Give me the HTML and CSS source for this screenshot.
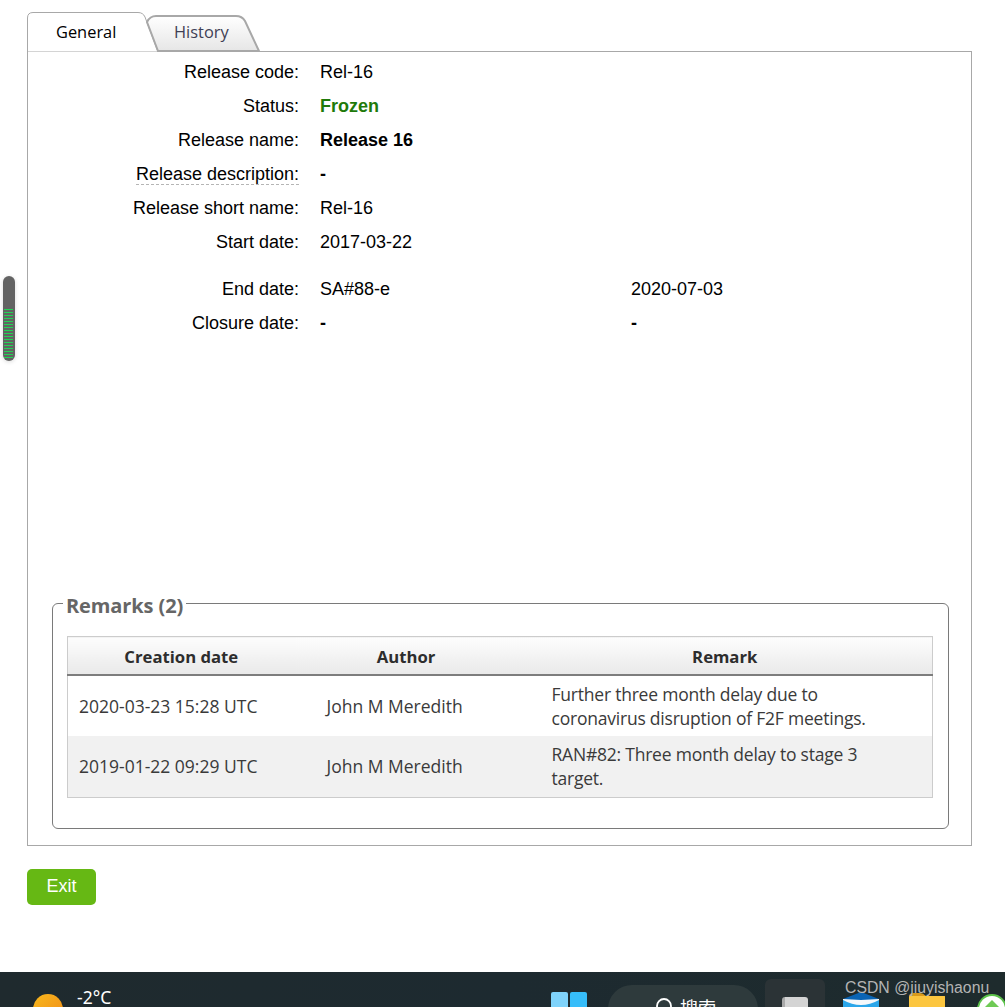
FILE: index.html
```html
<!DOCTYPE html>
<html lang="en">
<head>
<meta charset="utf-8">
<title>Release 16</title>
<link rel="stylesheet" href="styles.css">
</head>
<body>
<div class="page">
  <main class="main">
    <div class="tabs">
      <div class="tab tab-general">
        <svg class="tab-shape" width="132" height="40" viewBox="0 0 132 40"><path d="M.5 40V6Q.5.5 6 .5H111Q116 .5 118 5L131 40Z" fill="#fff" stroke="#a8a8a8"/></svg>
        <span class="tab-label">General</span>
      </div>
      <div class="tab tab-history">
        <svg class="tab-shape" width="115" height="37" viewBox="0 0 115 37"><defs><linearGradient id="tabg" x1="0" y1="0" x2="0" y2="1"><stop offset="0" stop-color="#fff"/><stop offset="1" stop-color="#e6e6e6"/></linearGradient></defs><path d="M12 36L1 7Q4 1 10 1H90Q96 1 99 6L113 36Z" fill="url(#tabg)" stroke="#a8a8a8" stroke-width="2"/></svg>
        <span class="tab-label tab-label-muted">History</span>
      </div>
    </div>
    <section class="panel">
      <div class="form">
        <div class="row"><span class="label">Release code:</span><span class="value">Rel-16</span></div>
        <div class="row"><span class="label">Status:</span><span class="value frozen">Frozen</span></div>
        <div class="row"><span class="label">Release name:</span><span class="value strong">Release 16</span></div>
        <div class="row"><span class="label"><span class="dotted">Release description:</span></span><span class="value strong">-</span></div>
        <div class="row"><span class="label">Release short name:</span><span class="value">Rel-16</span></div>
        <div class="row"><span class="label">Start date:</span><span class="value">2017-03-22</span></div>
        <div class="row row-gap"><span class="label">End date:</span><span class="value">SA#88-e</span><span class="value">2020-07-03</span></div>
        <div class="row"><span class="label">Closure date:</span><span class="value strong">-</span><span class="value strong">-</span></div>
      </div>
      <fieldset class="remarks">
        <legend class="remarks-title">Remarks (2)</legend>
        <table class="grid">
          <thead>
            <tr><th class="col-date">Creation date</th><th class="col-author">Author</th><th class="col-remark">Remark</th></tr>
          </thead>
          <tbody>
            <tr class="odd"><td class="cell-date">2020-03-23 15:28 UTC</td><td class="cell-author">John M Meredith</td><td class="cell-remark">Further three month delay due to coronavirus disruption of F2F meetings.</td></tr>
            <tr class="even"><td class="cell-date">2019-01-22 09:29 UTC</td><td class="cell-author">John M Meredith</td><td class="cell-remark">RAN#82: Three month delay to stage 3 target.</td></tr>
          </tbody>
        </table>
      </fieldset>
    </section>
    <button class="exit" type="button">Exit</button>
  </main>
  <footer class="taskbar">
    <span class="sun"></span>
    <span class="temp">-2°C</span>
    <svg class="winlogo" width="36" height="36" viewBox="0 0 36 36"><rect x="0" y="0" width="17" height="17" rx="2" fill="#7fd3fb"/><rect x="19" y="0" width="17" height="17" rx="2" fill="#36bdfa"/></svg>
    <div class="search">
      <svg width="20" height="20" viewBox="0 0 20 20"><circle cx="9" cy="9" r="7" fill="none" stroke="#fff" stroke-width="1.800"/></svg>
      <span class="search-text">搜索</span>
    </div>
    <div class="active-app"><span class="app-glyph"></span></div>
    <svg class="mail" width="36" height="30" viewBox="0 0 36 30"><path d="M0 30V7L18 0 36 7V30Z" fill="#0a64b4"/><path d="M0 7Q18 17 36 7V30H0Z" fill="#2aa6ea"/><path d="M0 7C6 7 12 8 18 8 24 8 30 7 36 7V8Q18 18 0 8Z" fill="#f4f8fb"/></svg>
    <svg class="folder" width="36" height="30" viewBox="0 0 36 30"><path d="M0 4Q0 0 4 0H11Q14 0 17 3H36V30H0Z" fill="#d99a1c"/><rect x="0" y="3" width="36" height="27" rx="1" fill="#fcc63f"/></svg>
    <svg class="orb" width="30" height="30" viewBox="0 0 30 30"><circle cx="15" cy="15" r="14" fill="#fff" stroke="#5cc24a" stroke-width="2"/><path d="M15 6 24 15H6Z" fill="#6fca55"/><rect x="10" y="15" width="10" height="9" fill="#6fca55"/></svg>
  </footer>
  <div class="watermark">CSDN @jiuyishaonu</div>
  <div class="meter" aria-hidden="true"><span class="meter-lines"></span></div>
</div>
</body>
</html>
```
FILE: styles.css
```css
* { box-sizing: border-box; }
html, body { margin: 0; padding: 0; background: #fff; }
body { font-family: "Liberation Sans", Arial, sans-serif; font-size: 18px; color: #000; }

.page { position: relative; display: flex; flex-direction: column; height: 1007px; overflow: hidden; }
.main { padding: 12px 33px 0 27px; }

.tabs { display: flex; height: 39px; }
.tab { position: relative; display: flex; align-items: center; font-family: "Open Sans", sans-serif; font-size: 16.400px; }
.tab-shape { position: absolute; left: 0; top: 0; }
.tab-general { width: 119px; padding-left: 29px; }
.tab-history { width: 115px; padding-left: 28px; margin-top: 3px; align-items: flex-start; }
.tab-label { position: relative; padding-bottom: 1px; }
.tab-label-muted { color: #3f3f55; padding-top: 5px; padding-bottom: 0; }

.panel { display: flex; flex-direction: column; height: 795px; border: 1px solid #a8a8a8; padding: 3px 22px 16px 24px; }
.form { margin-left: -24px; }
.row { display: grid; grid-template-columns: 271px 290px auto; column-gap: 21px; align-items: center; height: 34px; line-height: 34px; }
.row-gap { margin-top: 13px; }
.label { text-align: right; }
.dotted { border-bottom: 1px dashed #b5b5b5; padding-bottom: 0; line-height: 20px; display: inline-block; }
.value { min-width: 0; }
.strong { font-weight: 700; }
.frozen { font-weight: 700; color: #1f7a0a; }

.remarks { margin: auto 0 0; padding: 17px 15px 30px 14px; border: 1px solid #7a7a7a; border-radius: 6px; min-width: 0; }
.remarks-title { margin-left: -4px; padding: 4px 3px 0; font-family: "Open Sans", sans-serif; font-size: 20px; font-weight: 700; line-height: 27px; color: #666; letter-spacing: -.1px; }

.grid { width: 866px; table-layout: fixed; border-collapse: collapse; border: 1px solid #ccc; font-family: "Open Sans", sans-serif; font-size: 17.500px; color: #3a3a3a; }
.col-date { width: 227px; }
.col-author { width: 223px; }
.grid th { height: 38px; padding: 2px 0 0; background: linear-gradient(#fdfdfd, #e9e9e9); border-bottom: 2px solid #7d7d7d; border-top: 1px solid #ccc; font-size: 16.700px; font-weight: 700; color: #2d2d2d; text-align: center; }
.grid td { padding: 0; line-height: 24px; }
.odd td { height: 61px; }
.even td { height: 62px; }
.odd { background: #fff; }
.even { background: #f1f1f1; }
.cell-date { padding-left: 11px !important; }
.cell-author { padding-left: 32px !important; }
.cell-remark { padding: 0 48px 0 34px !important; letter-spacing: -.22px; }

.exit { display: block; width: 69px; height: 36px; margin-top: 23px; padding: 0 0 2px; border: 0; border-radius: 5px; background: #66b814; color: #fff; font-family: "Liberation Sans", Arial, sans-serif; font-size: 18px; }

.taskbar { position: relative; display: flex; align-items: flex-start; height: 35px; margin-top: auto; overflow: hidden; background: linear-gradient(90deg, #1f2a2e, #1d2a30 50%, #1e2b2d); color: #fff; font-family: "Noto Sans", sans-serif; }
.sun { flex: none; width: 30px; height: 30px; margin: 22px 0 0 33px; border-radius: 50%; background: linear-gradient(135deg, #f8b81c, #f08a18); }
.temp { flex: none; width: 474px; margin: 13px 0 0 14px; font-size: 17.500px; line-height: 24px; }
.winlogo { flex: none; margin-top: 20px; }
.search { flex: none; display: flex; align-items: flex-start; gap: 5px; width: 150px; height: 50px; margin: 13px 0 0 21px; padding: 12px 0 0 47px; border-radius: 24px; background: #2e3a3c; }
.search-text { font-family: "Noto Sans CJK SC", sans-serif; font-size: 18px; line-height: 20px; }
.active-app { flex: none; width: 60px; height: 50px; margin: 7px 0 0 7px; padding: 18px 0 0 17px; border-radius: 6px; background: #2b3336; }
.app-glyph { display: block; width: 26px; height: 26px; border-radius: 3px; background: linear-gradient(90deg, #aaa 0 12%, #d4d4d4 12%); }
.mail { flex: none; margin: 20px 0 0 18px; }
.folder { flex: none; margin: 21px 0 0 30px; }
.orb { flex: none; margin: 22px 0 0 32px; }

.watermark { position: absolute; left: 845px; top: 978px; font-size: 15.800px; line-height: 20px; color: #b4b4b4; white-space: nowrap; }
.meter { position: absolute; left: 3px; top: 276px; width: 12px; height: 85px; padding: 33px 2px 0 1px; border-radius: 6px; background: #636363; box-shadow: 0 1px 4px rgba(0,0,0,.15); }
.meter-lines { display: block; height: 49px; background: repeating-linear-gradient(#22d455 0 1px, #636363 1px 3px); }
```
